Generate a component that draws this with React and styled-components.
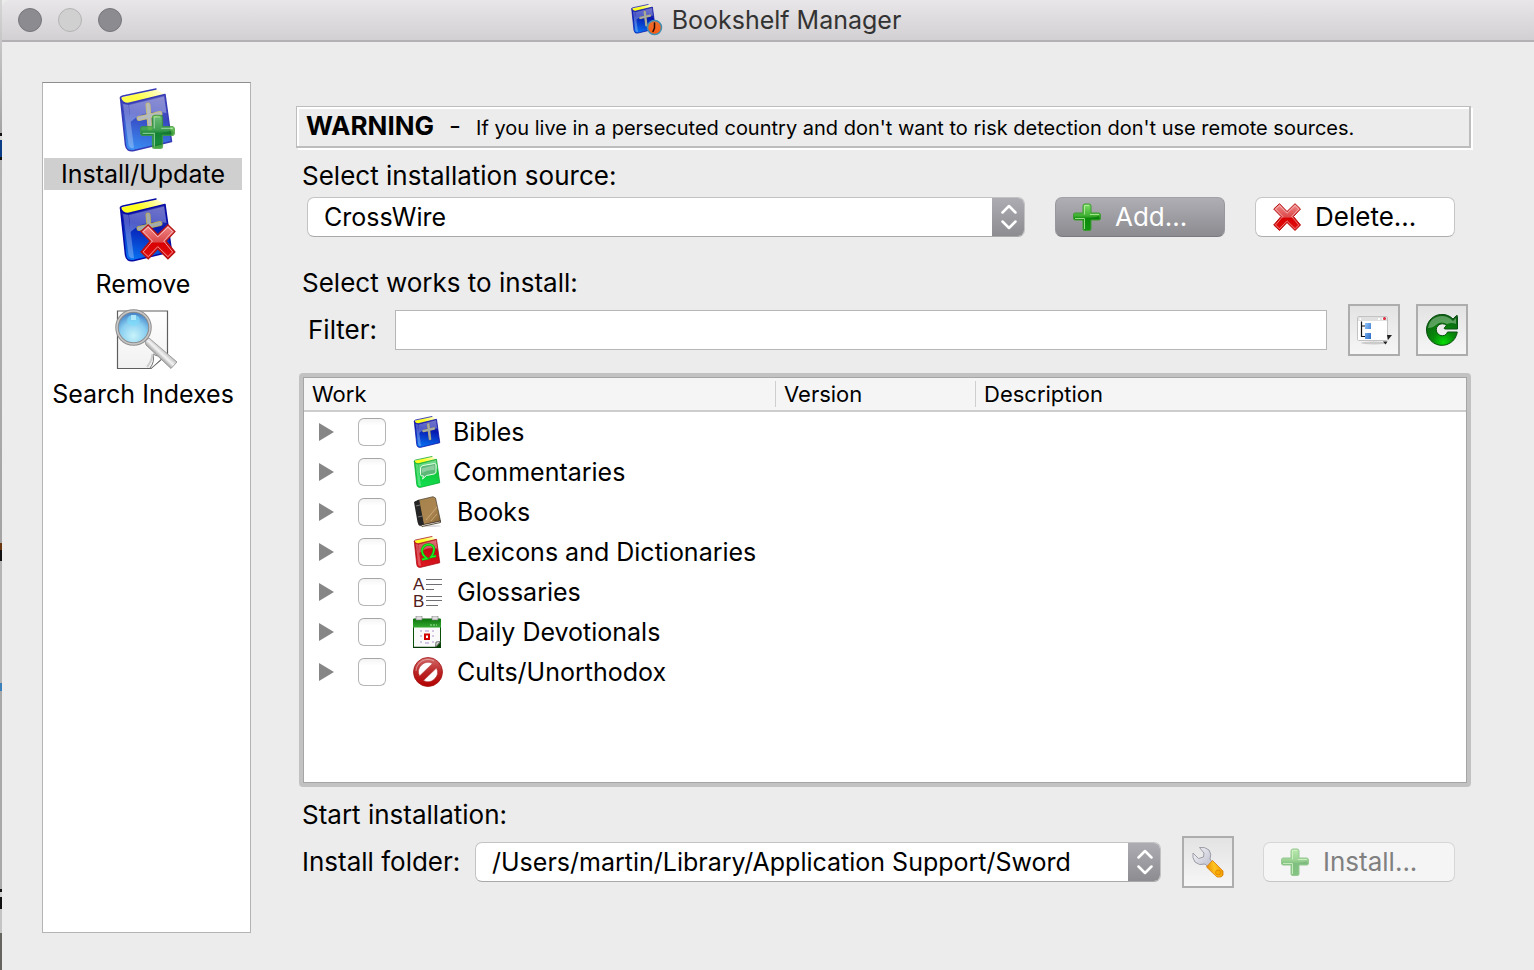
import React from "react";
import styled, { createGlobalStyle, css } from "styled-components";

const GlobalStyle = createGlobalStyle`
  *, *::before, *::after { box-sizing: border-box; }
  body {
    margin: 0;
    background: #ececec;
    color: #000;
    font-family: Inter, "Liberation Sans", sans-serif;
    font-size: 25px;
    line-height: 32px;
  }
  button, input, select { font: inherit; color: inherit; margin: 0; }
`;

/* ---------- layout ---------- */

const Window = styled.div`
  display: flex;
  flex-direction: column;
  min-height: 100vh;
  background: #ececec;
  border-left: 2px solid;
  border-image: linear-gradient(
      #d6d6d6, #a4a4a4 134px, #111 134px 137px, #d8d8d8 137px 141px, #0b3c86 141px 158px, #111 158px 161px,
      #b4b4b4 161px, #a4a4a4 543px, #6b3510 543px 550px, #111 550px 561px, #b4b4b4 561px 683px,
      #3a80bb 683px 691px, #a8a8a8 691px 888px, #111 888px 891px, #d0d0d0 891px 896px, #111 896px 908px,
      #c4c4c4 908px 932px, #66645f 932px
    ) 1;
`;

const TitleBar = styled.header`
  display: grid;
  grid-template-columns: 1fr auto 1fr;
  align-items: center;
  height: 42px;
  padding: 0 16px;
  background: linear-gradient(#e8e6e8, #d2d0d2);
  border-bottom: 2px solid #b3b1b3;
  border-top-left-radius: 8px;
`;

const Lights = styled.div`
  display: flex;
  gap: 16px;
`;

const Light = styled.button`
  width: 24px;
  height: 24px;
  padding: 0;
  border-radius: 50%;
  border: 1px solid ${(p) => (p.$dim ? "#b4b4b4" : "#77767a")};
  background: ${(p) => (p.$dim ? "#d1d0d1" : "#8c8b90")};
`;

const Title = styled.h1`
  display: flex;
  align-items: center;
  gap: 9px;
  margin: 0;
  padding-right: 4px;
  font-size: 25px;
  font-weight: 400;
  color: #333;
`;

const Content = styled.div`
  flex: 1;
  display: flex;
  gap: 45px;
  padding: 40px 62px 37px 40px;
`;

const Sidebar = styled.nav`
  flex: none;
  display: flex;
  flex-direction: column;
  align-items: flex-start;
  gap: 8px;
  width: 209px;
  padding: 5px 1px;
  background: #fff;
  border: 1px solid #b4b4b4;
  border-top-color: #8e8e8e;
`;

const SideItem = styled.button`
  display: flex;
  flex-direction: column;
  align-items: center;
  gap: 6px;
  width: 198px;
  padding: 0;
  border: 0;
  background: none;
`;

const SideLabel = styled.span`
  align-self: stretch;
  white-space: nowrap;
  background: ${(p) => (p.$selected ? "#cfcfcf" : "transparent")};
`;

const Main = styled.main`
  flex: 1;
  min-width: 0;
  display: flex;
  flex-direction: column;
  padding: 24px 0 45px;
`;

const Warning = styled.p`
  display: flex;
  align-items: baseline;
  gap: 15px;
  margin: 0 1px 0 0;
  padding: 3px 9px 2px;
  border: solid #bdbdbd;
  border-width: 1px 2px 2px 1px;
  box-shadow: inset 2px 2px 0 #fff, 2px 2px 0 #fff;
  font-size: 20px;
`;

const WarningTitle = styled.strong`
  font-size: 26px;
  font-weight: 700;
`;

const WarningDash = styled.span`
  font-size: 26px;
`;

const Heading = styled.h2`
  margin: ${(p) => p.$top}px 0 0 6px;
  font-size: 26px;
  font-weight: 400;
`;

const Row = styled.div`
  display: flex;
  align-items: center;
  margin-top: 5px;
  padding: 0 ${(p) => p.$right || 17}px 0 ${(p) => p.$left}px;
`;

const FieldLabel = styled.label`
  flex: none;
  width: ${(p) => p.$width}px;
  font-size: 26px;
  white-space: nowrap;
`;

/* ---------- controls ---------- */

const SelectBox = styled.div`
  flex: 1;
  min-width: 0;
  display: flex;
  height: 40px;
  border-radius: 7px;
  overflow: hidden;
  background: #fff;
  border: 1px solid #c3c3c3;
  border-bottom-color: #a9a9a9;
`;

const NativeSelect = styled.select`
  flex: 1;
  min-width: 0;
  appearance: none;
  border: 0;
  padding: 0 0 0 16px;
  background: transparent;
  outline: 0;
`;

const Stepper = styled.span`
  flex: none;
  display: flex;
  align-items: center;
  justify-content: center;
  width: 33px;
  margin: -1px;
  background: linear-gradient(#aeadb3, #8c8b90);
`;

const PushButton = styled.button`
  flex: none;
  display: flex;
  align-items: center;
  gap: 14px;
  width: ${(p) => p.$width}px;
  height: 40px;
  margin-left: ${(p) => p.$gap}px;
  padding: 0 17px;
  border-radius: 7px;
  border: 1px solid #c6c6c6;
  border-bottom-color: #adadad;
  background: #fff;
  font-size: 26px;
  ${(p) =>
    p.$primary &&
    css`
      color: #fff;
      background: linear-gradient(#afaeb4, #8c8b90);
      border-color: #a2a1a6 #98979c #7b7a7e;
    `}
  &:disabled {
    color: #808080;
    background: #f5f5f5;
    border-color: #d6d6d6 #d6d6d6 #c6c6c6;
  }
`;

const ToolButton = styled.button`
  flex: none;
  display: flex;
  align-items: center;
  justify-content: center;
  width: 52px;
  height: 52px;
  margin-left: ${(p) => p.$gap}px;
  padding: 0;
  border: 2px solid #adadad;
  background: linear-gradient(#e3e3e3, #f6f6f6);
`;

const FilterInput = styled.input`
  flex: 1;
  min-width: 0;
  height: 40px;
  padding: 0 8px;
  border: 1px solid #b6b6b6;
  background: #fff;
  outline: 0;
`;

/* ---------- works table ---------- */

const TableFrame = styled.div`
  flex: 1;
  min-height: 414px;
  margin: 17px 1px 0 3px;
  border: 4px solid #c2c2c2;
  border-radius: 4px;
  background: #fff;
  box-shadow: inset 0 0 0 1px #a5a5a5;
  padding: 1px;
`;

const Table = styled.table`
  width: 100%;
  table-layout: fixed;
  border-collapse: separate;
  border-spacing: 0;
`;

const HeadCell = styled.th`
  width: ${(p) => (p.$width ? p.$width + "px" : "auto")};
  height: 34px;
  padding: 0;
  text-align: left;
  font-size: 22px;
  line-height: 26px;
  font-weight: 400;
  background: #f5f5f5;
  border-bottom: 2px solid #cdcdcd;
`;

const HeadText = styled.span`
  display: block;
  padding-left: 8px;
  border-left: ${(p) => (p.$divided ? "1px solid #cfcfcf" : "0")};
`;

const Cell = styled.td`
  height: 40px;
  padding: 0;
`;

const Work = styled.div`
  display: flex;
  align-items: center;
  padding-left: 15px;
`;

const Expander = styled.button`
  display: flex;
  padding: 0;
  border: 0;
  background: none;
`;

const Check = styled.input`
  appearance: none;
  width: 28px;
  height: 28px;
  margin: 0 27px 0 24px;
  border: 1px solid #b5b5b5;
  border-top-color: #a6a6a6;
  border-radius: 6px;
  background: linear-gradient(#f4f4f4, #fff 25%);
`;

const WorkLabel = styled.label`
  display: flex;
  align-items: center;
  gap: 12px;
  white-space: nowrap;
`;

/* ---------- icons ---------- */

function BookShape({ id, edge, top, mid, low, paper = "#ffff20", children }) {
  return (
    <g>
      <defs>
        <linearGradient id={id} x1="0.6" y1="0" x2="0.4" y2="1">
          <stop offset="0" stopColor={top} />
          <stop offset="0.38" stopColor={mid} />
          <stop offset="1" stopColor={low} />
        </linearGradient>
        <linearGradient id={id + "p"} x1="0" x2="1" y1="0.3" y2="0">
          <stop offset="0.3" stopColor={paper} />
          <stop offset="1" stopColor="#fffff0" />
        </linearGradient>
      </defs>
      <path d="M2 9.500L37 1L46 6.500L8 15.500Q2 15 2 9.500Z" fill={`url(#${id}p)`} />
      <path d="M1.500 10Q3 15.500 9 15.500L46 6.500L52.500 53.500L15 62.500Q7.500 64 6.500 57Z" fill={`url(#${id})`} stroke={edge} strokeWidth="1.500" strokeLinejoin="round" />
      <path d="M4 16L9.500 57Q11 61 15 60L9.500 17Z" fill="#fff" opacity="0.28" />
      <path d="M10 17L45 8.500L47.500 25Q26 21 11.500 34Z" fill="#fff" opacity="0.3" />
      <path d="M1.500 10Q1.500 8.500 4 8L37 1" fill="none" stroke={edge} strokeWidth="1.500" strokeLinecap="round" />
      {children}
    </g>
  );
}

const Cross = ({ tall }) => (
  <g fill="none" strokeLinecap="round">
    <path d={tall ? "M29.500 17L33 46M20 30L41 25" : "M29 17L31 40M20 30.500L41 25.500"} stroke="#b5a95a" strokeWidth="5" />
    <path d={tall ? "M29.500 17L33 46M20 30L41 25" : "M29 17L31 40M20 30.500L41 25.500"} stroke="#a4abb0" strokeWidth="3" />
  </g>
);

function BlueBook({ id, tall, pale }) {
  return (
    <g opacity={pale ? 0.8 : 1}>
      <BookShape id={id} edge="#0509a5" top="#3438b0" mid="#0718b0" low="#0870f0">
        <Cross tall={tall} />
      </BookShape>
    </g>
  );
}

function PlusShape({ id }) {
  const d = "M10 3Q10 1 12 1H16Q18 1 18 3V10H26Q27.500 10.500 27.500 12V15Q27.500 17 26 17H18V26Q18 27.500 16 27.500H12Q10 27.500 10 26V17H2Q0.500 17 0.500 15V12Q0.500 10 2 10H10Z";
  return (
    <g>
      <defs>
        <linearGradient id={id} x1="0" y1="0" x2="0" y2="1">
          <stop offset="0" stopColor="#7fe06a" />
          <stop offset="0.45" stopColor="#3fae32" />
          <stop offset="0.55" stopColor="#0b8a0b" />
          <stop offset="1" stopColor="#149414" />
        </linearGradient>
      </defs>
      <path d={d} fill={`url(#${id})`} stroke="#3d9c30" strokeWidth="1" />
      <path d="M11.500 26V15.500H2M11.500 11.500V2.500H16M17 11.500H26" fill="none" stroke="#b5f29c" strokeWidth="1" opacity="0.8" />
      <path d="M18 15Q24 14 26 12.500V15.500H18Z" fill="#067206" opacity="0.6" />
    </g>
  );
}

function XShape({ id }) {
  return (
    <g>
      <defs>
        <linearGradient id={id} x1="0" y1="0" x2="0" y2="1">
          <stop offset="0" stopColor="#f08a8a" />
          <stop offset="0.5" stopColor="#dd4a4a" />
          <stop offset="0.54" stopColor="#d90000" />
          <stop offset="1" stopColor="#e21010" />
        </linearGradient>
      </defs>
      <path d="M6.500 0.700L14 8.500L22 0.700L27.500 6L20.500 13.500L27.500 22L22 27.500L14 19.500L6.500 27.500L0.700 22L8 13.500L0.700 6Z" fill={`url(#${id})`} stroke="#b51212" strokeWidth="1" />
      <path d="M6.500 2.500L14 10.200L22 2.500L25.700 6L18.700 13.500L25.700 22L22 25.700L14 17.800L6.500 25.700L2.500 22L9.800 13.500L2.500 6Z" fill="none" stroke="#fff" strokeWidth="0.700" opacity="0.65" />
    </g>
  );
}

const PlusIcon = ({ id, faded }) => (
  <svg width="28" height="28" viewBox="0 0 28 28" opacity={faded ? 0.5 : 1} aria-hidden="true">
    <PlusShape id={id} />
  </svg>
);

const DeleteIcon = () => (
  <svg width="28" height="28" viewBox="0 0 28 28" aria-hidden="true">
    <XShape id="deleteX" />
  </svg>
);

const InstallSideIcon = () => (
  <svg width="68" height="64" viewBox="0 0 68 64" aria-hidden="true">
    <g transform="translate(10 0)"><BlueBook id="sideInstall" pale /></g>
    <g transform="translate(31 26) scale(1.250)" opacity="0.8"><PlusShape id="sidePlus" /></g>
  </svg>
);

const RemoveSideIcon = () => (
  <svg width="68" height="64" viewBox="0 0 68 64" aria-hidden="true">
    <g transform="translate(10 0)"><BlueBook id="sideRemove" /></g>
    <g transform="translate(31 26) scale(1.270)"><XShape id="sideX" /></g>
  </svg>
);

const SearchSideIcon = () => (
  <svg width="68" height="64" viewBox="0 0 68 64" aria-hidden="true">
    <defs>
      <radialGradient id="lens" cx="0.5" cy="0.75" r="0.75">
        <stop offset="0" stopColor="#c8f4fb" />
        <stop offset="0.55" stopColor="#88cdf0" />
        <stop offset="1" stopColor="#3672bd" />
      </radialGradient>
      <linearGradient id="handle" x1="0" y1="1" x2="1" y2="0">
        <stop offset="0.35" stopColor="#777" />
        <stop offset="0.5" stopColor="#f4f4f4" />
        <stop offset="0.7" stopColor="#8a8a8a" />
      </linearGradient>
      <linearGradient id="sheet" x1="0" y1="0" x2="0" y2="1">
        <stop offset="0" stopColor="#fff" />
        <stop offset="1" stopColor="#f1f1f1" />
      </linearGradient>
    </defs>
    <path d="M8.500 3H58.500V46L42 60.500H8.500Z" fill="url(#sheet)" stroke="#5e5e5e" strokeWidth="1.200" />
    <path d="M41 60Q46 54 44 46Q50 50 58 46L42 60.500Z" fill="#fff" stroke="#777" strokeWidth="1" />
    <path d="M38 59Q43 53 43.500 46" fill="none" stroke="#ccc" strokeWidth="2" />
    <path d="M36 33L40 30L68 54L62 60.500L37 37Z" fill="url(#handle)" stroke="#8b8b8b" strokeWidth="0.800" />
    <circle cx="24.500" cy="19.500" r="16.500" fill="url(#lens)" stroke="#8d8d8d" strokeWidth="3.500" />
    <circle cx="24.500" cy="19.500" r="16.500" fill="none" stroke="#c9c9c9" strokeWidth="1.500" />
    <path d="M18 13Q18 7 24.500 7T31 13Q29 18 24.500 18T18 13Z" fill="#7cdcfa" opacity="0.65" />
    <path d="M22 7H27V12H22Z" fill="#c5f5ff" opacity="0.7" />
  </svg>
);

const TitleIcon = () => (
  <svg width="32" height="32" viewBox="0 0 64 64" aria-hidden="true">
    <defs>
      <linearGradient id="clock" x1="0" y1="0" x2="0" y2="1">
        <stop offset="0" stopColor="#e87032" />
        <stop offset="1" stopColor="#ff5a10" />
      </linearGradient>
    </defs>
    <g transform="scale(0.930)"><BlueBook id="titleBook" tall /></g>
    <circle cx="47" cy="47" r="14" fill="url(#clock)" stroke="#3f90b4" strokeWidth="3" />
    <path d="M47 38V48L44 55" fill="none" stroke="#2a0b00" strokeWidth="3" strokeLinecap="round" />
  </svg>
);

const BookRowIcon = ({ children }) => (
  <svg width="28" height="32" viewBox="-1 0 56 64" aria-hidden="true">{children}</svg>
);

const BibleIcon = () => (
  <BookRowIcon><BlueBook id="bible" tall /></BookRowIcon>
);

const CommentaryIcon = () => (
  <BookRowIcon>
    <BookShape id="commentary" edge="#05a52a" top="#3fc860" mid="#12c83c" low="#10e050">
      <path d="M14 24Q15 20 19 19L42 15Q45 15 45 18V32Q45 35 41 36L26 39L18 46L20 40Q14 41 14 37Z" fill="#5cb878" stroke="#e5ffe5" strokeWidth="2" />
      <path d="M16 25L42 18V28Q28 27 17 34Z" fill="#fff" opacity="0.3" />
    </BookShape>
  </BookRowIcon>
);

const LexiconIcon = () => (
  <BookRowIcon>
    <BookShape id="lexicon" edge="#a80812" top="#cc3038" mid="#c20a14" low="#e01820">
      <path d="M17 47L27 45Q16 37 17 28Q20 17 30 17Q42 17 41 28Q40 36 35 42L45 40" fill="none" stroke="#0c9c10" strokeWidth="5" />
      <path d="M17 47L27 45Q16 37 17 28Q20 17 30 17Q42 17 41 28Q40 36 35 42L45 40" fill="none" stroke="#20f020" strokeWidth="3" />
    </BookShape>
  </BookRowIcon>
);

const BooksIcon = () => (
  <svg width="32" height="32" viewBox="0 0 32 32" aria-hidden="true">
    <defs>
      <linearGradient id="leather" x1="0" y1="0" x2="1" y2="1">
        <stop offset="0" stopColor="#a5824c" />
        <stop offset="0.6" stopColor="#ab8550" />
        <stop offset="1" stopColor="#80602f" />
      </linearGradient>
    </defs>
    <ellipse cx="17" cy="30" rx="11" ry="1" fill="#ddd" />
    <path d="M1 6L6 3.500L11 28L7 30Q5 29 4.500 26Z" fill="#252525" />
    <path d="M6 4L20 0.700L22.500 2L27.500 25L10 29Z" fill="url(#leather)" stroke="#453b2c" strokeWidth="0.700" />
    <path d="M8 29L27.500 25V26.500L9 30.500Z" fill="#f6f1df" stroke="#382c20" strokeWidth="0.800" />
    <path d="M2 5.500L6 4L11 28.500L7.500 29Z" fill="#252525" />
    <path d="M3 10L7 9M5 21L9.500 20" stroke="#777" />
    <path d="M13 24L24 11M18 25L24 18" stroke="#d0b285" strokeWidth="0.800" />
  </svg>
);

const GlossaryText = styled.text`
  font-family: "Liberation Sans", sans-serif;
  font-size: 17px;
  line-height: 16px;
  fill: #502020;
`;

const GlossaryIcon = () => (
  <svg width="32" height="32" viewBox="0 0 32 32" overflow="visible" aria-hidden="true">
    <GlossaryText x="0" y="14">A</GlossaryText>
    <GlossaryText x="0" y="31">B</GlossaryText>
    <path d="M13 3.500H29M13 8.500H29M13 13.500H21M13 20.500H29M13 24.500H29M13 29.500H25" stroke="#707074" strokeWidth="1" />
  </svg>
);

const CalendarIcon = () => (
  <svg width="32" height="32" viewBox="0 0 32 32" aria-hidden="true">
    <defs>
      <linearGradient id="calTop" x1="0" y1="0" x2="0" y2="1">
        <stop offset="0" stopColor="#0d780d" />
        <stop offset="1" stopColor="#35aa32" />
      </linearGradient>
    </defs>
    <path d="M0.500 3H27.500V31.500H0.500Z" fill="#fafafa" stroke="#085008" />
    <path d="M0 3H28V11.500H0Z" fill="url(#calTop)" />
    <path d="M0 31.500H28" stroke="#063806" strokeWidth="1.500" />
    <path d="M3 0H9V4H3ZM19 0H25V4H19Z" fill="#ddd" stroke="#777" strokeWidth="0.600" />
    <path d="M17 9H24" stroke="#a4e29f" strokeDasharray="2 1" />
    <path d="M7 15H9M7 20H9M7 26H9M12 15H16M12 27H16M19 15H21M19 20H21M19 26H21" stroke="#d2c5e5" strokeWidth="2" />
    <path d="M12 18.500H16V23H12Z" fill="#fff" stroke="#d20000" strokeWidth="2" />
    <path d="M22.500 31L23 26L27.500 25.500Z" fill="#ddd" stroke="#555" strokeWidth="0.800" />
    <path d="M23 31L27.500 26V31Z" fill="#073d07" />
  </svg>
);

const ProhibitedIcon = () => (
  <svg width="32" height="32" viewBox="0 0 32 32" aria-hidden="true">
    <defs>
      <linearGradient id="ban" x1="0" y1="0" x2="0" y2="1">
        <stop offset="0" stopColor="#d36b6b" />
        <stop offset="0.5" stopColor="#bb2525" />
        <stop offset="1" stopColor="#b40000" />
      </linearGradient>
    </defs>
    <circle cx="15" cy="16" r="14.500" fill="url(#ban)" stroke="#a31515" strokeWidth="0.800" />
    <path d="M6.500 20A9.500 9.500 0 0 1 19.500 7.500Z" fill="#fff" stroke="#b34040" strokeWidth="0.600" />
    <path d="M23.500 12A9.500 9.500 0 0 1 10.500 24.500Z" fill="#fff" stroke="#b34040" strokeWidth="0.600" />
    <path d="M3 15A12 12 0 0 1 21 5" fill="none" stroke="#fff" strokeWidth="0.800" opacity="0.5" />
  </svg>
);

const TreeViewIcon = () => (
  <svg width="36" height="32" viewBox="0 0 36 32" overflow="visible" aria-hidden="true">
    <defs>
      <linearGradient id="node" x1="0" y1="0" x2="1" y2="1">
        <stop offset="0" stopColor="#8fc2fa" />
        <stop offset="1" stopColor="#2b6cc4" />
      </linearGradient>
    </defs>
    <ellipse cx="18" cy="29" rx="13" ry="1.500" fill="#bbb" opacity="0.7" />
    <rect x="1.500" y="2.500" width="30" height="24" rx="1" fill="#fff" stroke="#c3c3c3" />
    <path d="M2 3H31V7H2Z" fill="#e0e0e0" />
    <path d="M3.500 5H5M22 5H24M26 5H27" stroke="#fff" strokeWidth="2" />
    <circle cx="28.500" cy="4.500" r="1.500" fill="#dd2b3e" />
    <path d="M5.500 7.500V22.500H10M5.500 12H10" fill="none" stroke="#111" strokeWidth="1.200" />
    <path d="M9 9H15V15H9ZM9 19H15V25H9Z" fill="url(#node)" />
    <path d="M27 27.500H31.500L29.500 30.500ZM31 21H36L32 26Z" fill="#222" />
  </svg>
);

const RefreshIcon = () => (
  <svg width="32" height="32" viewBox="0 0 32 32" aria-hidden="true">
    <defs>
      <radialGradient id="refresh" cx="0.550" cy="0.9" r="0.9">
        <stop offset="0" stopColor="#08dd08" />
        <stop offset="0.4" stopColor="#07880a" />
        <stop offset="1" stopColor="#0d5c14" />
      </radialGradient>
    </defs>
    <path d="M27 5L30.500 1.500Q31.500 1 31.500 2.500V15H19Q17.500 14.500 18.500 13.500L20.500 11.500A6 6 0 1 0 20.500 20L21.500 18H31.300A15.500 15.500 0 1 1 27 5Z" fill="url(#refresh)" stroke="#0b5010" strokeWidth="1" />
    <path d="M2 14Q4 2.500 16 2Q22 2 27 7L30 4V10Q26 8 21 10Q14 6.500 10 11Q7 14 2 14Z" fill="#a5d4a5" opacity="0.5" />
  </svg>
);

const WrenchIcon = () => (
  <svg width="32" height="32" viewBox="0 0 32 32" aria-hidden="true">
    <defs>
      <linearGradient id="steel" x1="0" y1="0" x2="1" y2="1">
        <stop offset="0" stopColor="#f8f8fb" />
        <stop offset="1" stopColor="#b8b9ca" />
      </linearGradient>
      <linearGradient id="grip" x1="0" y1="0.6" x2="1" y2="0.4">
        <stop offset="0" stopColor="#e78600" />
        <stop offset="0.5" stopColor="#ffc520" />
        <stop offset="1" stopColor="#ed9500" />
      </linearGradient>
    </defs>
    <path d="M1 7Q0 12 3 16Q7 20 13 18L17 22L20.500 16.500L18 13Q20 8 17 4Q13 0.500 7.500 1.500L12 7L11.500 11L6.500 12.500Z" fill="url(#steel)" stroke="#9c9ca6" strokeWidth="1" />
    <path d="M14.500 21L20.500 14.500L31 25V29Q30 31 28 31H25Z" fill="url(#grip)" stroke="#d97800" strokeWidth="0.800" />
    <circle cx="26" cy="26.500" r="2.500" fill="#f9a800" stroke="#dc8200" strokeWidth="0.800" />
  </svg>
);

const Chevrons = () => (
  <Stepper>
    <svg width="16" height="26" viewBox="0 0 16 26" aria-hidden="true">
      <path d="M1.500 8.500L8 2L14.500 8.500M1.500 17.500L8 24L14.500 17.500" fill="none" stroke="#fff" strokeWidth="2.500" strokeLinecap="round" strokeLinejoin="round" />
    </svg>
  </Stepper>
);

const SIDE_ITEMS = [
  { label: "Install/Update", Icon: InstallSideIcon, selected: true },
  { label: "Remove", Icon: RemoveSideIcon },
  { label: "Search Indexes", Icon: SearchSideIcon },
];

const WORKS = [
  { id: "bibles", label: "Bibles", Icon: BibleIcon },
  { id: "commentaries", label: "Commentaries", Icon: CommentaryIcon },
  { id: "books", label: "Books", Icon: BooksIcon },
  { id: "lexicons", label: "Lexicons and Dictionaries", Icon: LexiconIcon },
  { id: "glossaries", label: "Glossaries", Icon: GlossaryIcon },
  { id: "devotionals", label: "Daily Devotionals", Icon: CalendarIcon },
  { id: "cults", label: "Cults/Unorthodox", Icon: ProhibitedIcon },
];

export default function App() {
  return (
    <Window>
      <GlobalStyle />
      <TitleBar>
        <Lights>
          <Light aria-label="Close" />
          <Light aria-label="Minimize" $dim />
          <Light aria-label="Zoom" />
        </Lights>
        <Title><TitleIcon />Bookshelf Manager</Title>
      </TitleBar>
      <Content>
        <Sidebar>
          {SIDE_ITEMS.map(({ label, Icon, selected }) => (
            <SideItem key={label} type="button">
              <Icon />
              <SideLabel $selected={selected}>{label}</SideLabel>
            </SideItem>
          ))}
        </Sidebar>
        <Main>
          <Warning>
            <WarningTitle>WARNING</WarningTitle>
            <WarningDash>-</WarningDash>
            <span>If you live in a persecuted country and don't want to risk detection don't use remote sources.</span>
          </Warning>
          <Heading $top={12} as="label" htmlFor="source">Select installation source:</Heading>
          <Row $left={11}>
            <SelectBox>
              <NativeSelect id="source"><option>CrossWire</option></NativeSelect>
              <Chevrons />
            </SelectBox>
            <PushButton $width={170} $gap={30} $primary><PlusIcon id="addPlus" />Add...</PushButton>
            <PushButton $width={200} $gap={30}><DeleteIcon />Delete...</PushButton>
          </Row>
          <Heading $top={30}>Select works to install:</Heading>
          <Row $left={12} $right={4}>
            <FieldLabel $width={87} htmlFor="filter">Filter:</FieldLabel>
            <FilterInput id="filter" type="text" />
            <ToolButton $gap={21} aria-label="Grouping"><TreeViewIcon /></ToolButton>
            <ToolButton $gap={16} aria-label="Refresh"><RefreshIcon /></ToolButton>
          </Row>
          <TableFrame>
            <Table>
              <thead>
                <tr>
                  <HeadCell $width={471}><HeadText>Work</HeadText></HeadCell>
                  <HeadCell $width={200}><HeadText $divided>Version</HeadText></HeadCell>
                  <HeadCell><HeadText $divided>Description</HeadText></HeadCell>
                </tr>
              </thead>
              <tbody>
                {WORKS.map(({ id, label, Icon }) => (
                  <tr key={id}>
                    <Cell>
                      <Work>
                        <Expander aria-label={"Expand " + label}>
                          <svg width="15" height="18" viewBox="0 0 15 18" aria-hidden="true"><path d="M0 0L15 9L0 18Z" fill="#868686" /></svg>
                        </Expander>
                        <Check type="checkbox" id={id} />
                        <WorkLabel htmlFor={id}><Icon />{label}</WorkLabel>
                      </Work>
                    </Cell>
                    <Cell />
                    <Cell />
                  </tr>
                ))}
              </tbody>
            </Table>
          </TableFrame>
          <Heading $top={12}>Start installation:</Heading>
          <Row $left={6}>
            <FieldLabel $width={173} htmlFor="folder">Install folder:</FieldLabel>
            <SelectBox>
              <NativeSelect id="folder"><option>/Users/martin/Library/Application Support/Sword</option></NativeSelect>
              <Chevrons />
            </SelectBox>
            <ToolButton $gap={21} aria-label="Configure folders"><WrenchIcon /></ToolButton>
            <PushButton $width={192} $gap={29} disabled><PlusIcon id="installPlus" faded />Install...</PushButton>
          </Row>
        </Main>
      </Content>
    </Window>
  );
}
